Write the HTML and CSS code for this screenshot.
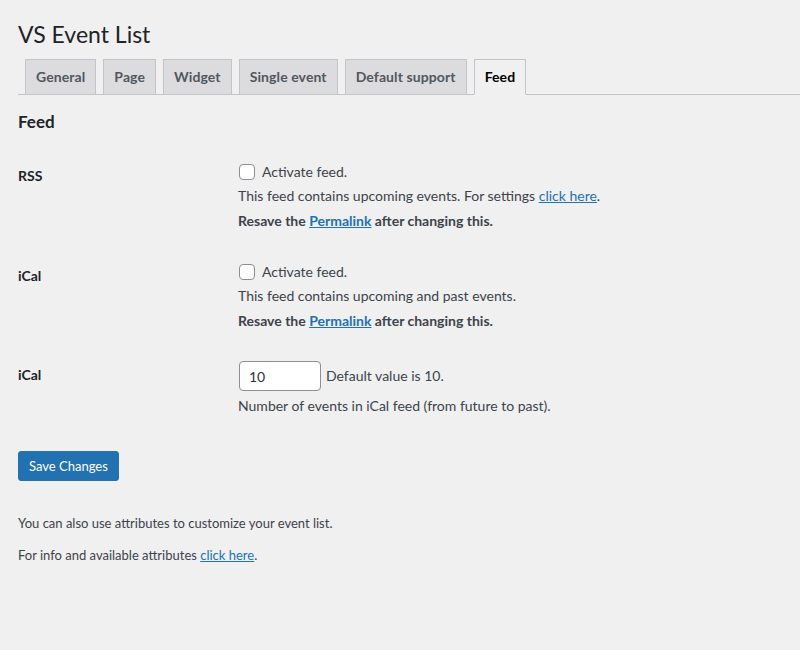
FILE: index.html
```html
<!DOCTYPE html>
<html lang="en">
<head>
<meta charset="utf-8">
<title>VS Event List</title>
<link rel="stylesheet" href="styles.css">
</head>
<body>
<div class="wrap">
  <h1 class="page-title">VS Event List</h1>
  <nav class="nav-tab-wrapper">
    <a class="nav-tab" href="#">General</a>
    <a class="nav-tab" href="#">Page</a>
    <a class="nav-tab" href="#">Widget</a>
    <a class="nav-tab" href="#">Single event</a>
    <a class="nav-tab" href="#">Default support</a>
    <a class="nav-tab nav-tab-active" href="#">Feed</a>
  </nav>
  <form class="settings">
    <h2 class="section-title">Feed</h2>
    <table class="form-table">
      <tr>
        <th>RSS</th>
        <td class="cell">
          <label class="check"><input type="checkbox" class="box"> Activate feed.</label>
          <p class="desc">This feed contains upcoming events. For settings <a href="#">click here</a>.</p>
          <p class="desc desc-strong">Resave the <a href="#">Permalink</a> after changing this.</p>
        </td>
      </tr>
      <tr>
        <th>iCal</th>
        <td class="cell">
          <label class="check"><input type="checkbox" class="box"> Activate feed.</label>
          <p class="desc">This feed contains upcoming and past events.</p>
          <p class="desc desc-strong">Resave the <a href="#">Permalink</a> after changing this.</p>
        </td>
      </tr>
      <tr>
        <th class="th-input">iCal</th>
        <td class="cell cell-input">
          <div class="input-line"><input type="text" class="num" value="10"> <span>Default value is 10.</span></div>
          <p class="desc">Number of events in iCal feed (from future to past).</p>
        </td>
      </tr>
    </table>
    <p class="submit"><button type="button" class="button-primary">Save Changes</button></p>
  </form>
  <p class="note">You can also use attributes to customize your event list.</p>
  <p class="note">For info and available attributes <a href="#">click here</a>.</p>
</div>
</body>
</html>
```

FILE: styles.css
```css
html, body {
  margin: 0;
  padding: 0;
}
body {
  background: #f0f0f1;
  color: #3c434a;
  font-family: Lato, "Liberation Sans", sans-serif;
  font-size: 13px;
  line-height: 20px;
}
a {
  color: #2271b1;
  text-decoration: underline;
}
.wrap {
  margin: 10px 0 0 18px;
}
.page-title {
  font-size: 23px;
  font-weight: 400;
  margin: 0;
  padding: 9px 0 4px;
  line-height: 30px;
  color: #1d2327;
}
.nav-tab-wrapper {
  display: flex;
  align-items: flex-end;
  margin-top: 6px;
  border-bottom: 1px solid #c3c4c7;
}
.nav-tab {
  margin-left: 7px;
  padding: 5px 10px;
  font-size: 14px;
  line-height: 24px;
  font-weight: 700;
  letter-spacing: 0.1px;
  border: 1px solid #c3c4c7;
  border-bottom: none;
  background: #dcdcde;
  color: #50575e;
  text-decoration: none;
}
.nav-tab-active {
  background: #f0f0f1;
  color: #000;
  border-bottom: 1px solid #f0f0f1;
  margin-bottom: -1px;
}
.section-title {
  font-size: 17px;
  font-weight: 700;
  line-height: 20px;
  margin: 17px 0;
  color: #1d2327;
}
.form-table {
  border-collapse: collapse;
  border-spacing: 0;
}
.form-table th {
  width: 200px;
  padding: 18px 10px 18px 0;
  text-align: left;
  vertical-align: top;
  font-size: 14px;
  line-height: 18px;
  font-weight: 700;
  color: #1d2327;
}
.form-table .th-input {
  padding-top: 17px;
}
.cell {
  padding: 15px 10px 18px;
  vertical-align: top;
}
.cell-input {
  padding: 12px 10px 15px;
}
.check {
  display: flex;
  align-items: center;
  gap: 7px;
  font-size: 14px;
  line-height: 16px;
  color: #3c434a;
}
.box {
  appearance: none;
  -webkit-appearance: none;
  margin: 0 0 0 1px;
  width: 16px;
  height: 16px;
  border: 1px solid #8c8f94;
  border-radius: 4px;
  background: #fff;
}
.desc {
  margin: 6px 0 0;
  font-size: 14px;
  line-height: 20px;
}
.desc-strong {
  margin-top: 5px;
  font-weight: 700;
}
.input-line {
  display: flex;
  align-items: center;
  gap: 5px;
  font-size: 14px;
}
.num {
  box-sizing: border-box;
  width: 82px;
  height: 30px;
  margin: 0 0 0 1px;
  padding: 0 9px;
  border: 1px solid #8c8f94;
  border-radius: 4px;
  background: #fff;
  color: #2c3338;
  font-family: inherit;
  font-size: 14px;
}
.cell-input .desc {
  margin-top: 5px;
}
.submit {
  margin: 20px 0 32px;
}
.button-primary {
  height: 30px;
  padding: 0 10px;
  background: #2271b1;
  border: 1px solid #2271b1;
  border-radius: 3px;
  color: #fff;
  font-family: inherit;
  font-size: 13px;
}
.note {
  margin: 12px 0;
  font-size: 13px;
  line-height: 20px;
}
```
